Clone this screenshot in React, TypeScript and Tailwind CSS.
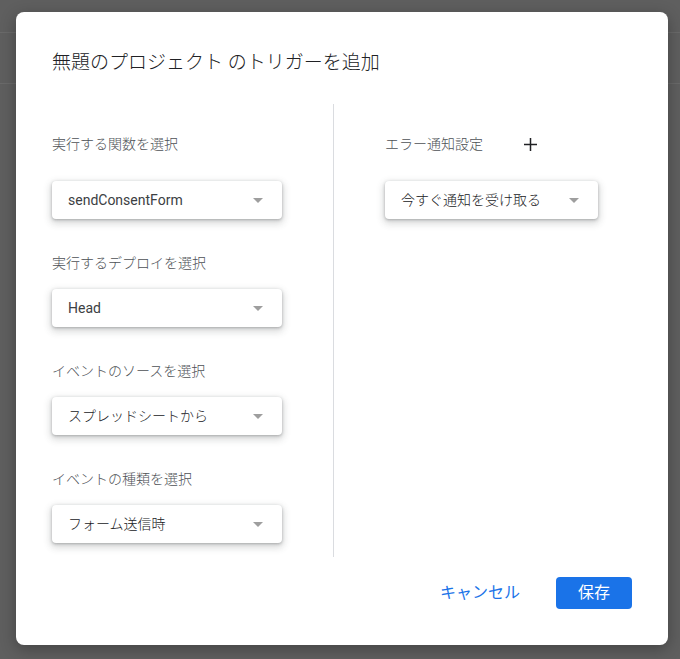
const font = "font-['Roboto','Noto_Sans_CJK_JP',sans-serif]";

function Caret() {
  return (
    <svg width="10" height="5" viewBox="0 0 10 5" className="shrink-0">
      <polygon points="0,0 10,0 5,5" fill="#9e9e9e" />
    </svg>
  );
}

function Select({ value, width, light }: { value: string; width: string; light?: boolean }) {
  return (
    <div
      className={`flex h-[38px] items-center justify-between rounded-[4px] bg-white pl-4 pr-[19px] text-[14px] text-[#3c4043] shadow-[0_1px_3px_rgba(60,64,67,0.35),0_3px_7px_2px_rgba(60,64,67,0.18)] ${width}`}
    >
      <span className={light ? "font-light text-[#202124]" : ""}>{value}</span>
      <Caret />
    </div>
  );
}

export default function App() {
  const fields = [
    { label: "実行するデプロイを選択", value: "Head", light: false },
    { label: "イベントのソースを選択", value: "スプレッドシートから", light: true },
    { label: "イベントの種類を選択", value: "フォーム送信時", light: true },
  ];

  return (
    <div className={`relative h-[659px] w-full overflow-hidden bg-[#5f5f5f] ${font}`}>
      {/* page behind the overlay */}
      <div className="h-[33px] border-b border-[#6a6a6a]" />
      <div className="h-[51px] border-b border-[#6a6a6a]" />

      <div className="absolute left-4 top-3 flex h-[633px] w-[652px] flex-col rounded-lg bg-white pl-9 pr-9 pt-[37px] shadow-[0_4px_16px_rgba(0,0,0,0.3)]">
        <h1 className="text-[19px] font-light leading-[28px] text-[#202124]">
          無題のプロジェクト のトリガーを追加
        </h1>

        <div className="mt-[27px] flex h-[453px]">
          <div className="w-[282px] border-r border-[#dadce0] pt-[30px]">
            <div className="text-[14px] font-light leading-5 text-[#4d5156]">実行する関数を選択</div>
            <div className="mt-[27px]">
              <Select value="sendConsentForm" width="w-[230px]" />
            </div>
            {fields.map((f) => (
              <div key={f.label}>
                <div className="mt-[34px] text-[14px] font-light leading-5 text-[#4d5156]">{f.label}</div>
                <div className="mt-[16px]">
                  <Select value={f.value} width="w-[230px]" light={f.light} />
                </div>
              </div>
            ))}
          </div>

          <div className="pl-[51px] pt-[30px]">
            <div className="flex h-5 items-center">
              <span className="text-[14px] font-light leading-5 text-[#4d5156]">エラー通知設定</span>
              <svg width="13" height="13" viewBox="0 0 13 13" className="ml-[41px]">
                <path d="M6.5 0v13M0 6.5h13" stroke="#202124" strokeWidth="1.5" />
              </svg>
            </div>
            <div className="mt-[27px]">
              <Select value="今すぐ通知を受け取る" width="w-[213px]" light />
            </div>
          </div>
        </div>

        <div className="mt-5 flex items-center justify-end gap-9">
          <button className="text-[16px] text-[#1a73e8]">キャンセル</button>
          <button className="h-8 w-[76px] rounded-[4px] bg-[#1a73e8] text-[16px] text-white">
            保存
          </button>
        </div>
      </div>
    </div>
  );
}
